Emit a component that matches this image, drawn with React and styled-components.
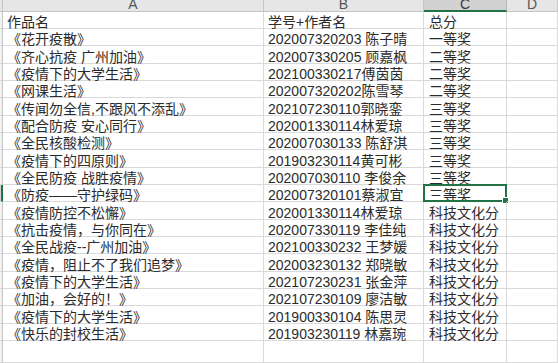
import React from "react";
import styled, { createGlobalStyle } from "styled-components";

const Global = createGlobalStyle`
  html, body { margin: 0; padding: 0; background: #fff; }
  body { font-family: "Liberation Sans", "Noto Sans CJK SC", sans-serif; overflow: hidden; }
`;

const GREEN = "#217346";

const Sheet = styled.div`
  display: grid;
  grid-template-columns: 3px 261px 160px 83px 1fr;
  grid-template-rows: 11.5px repeat(19, 17.35px) 1fr;
  width: 558px;
  height: 363px;
  overflow: hidden;
`;

const Corner = styled.div`
  background: #e6e6e6;
  border-right: 1px solid #c4c4c4;
  border-bottom: 1px solid #c4c4c4;
  box-sizing: border-box;
`;

const ColHead = styled.div`
  box-sizing: border-box;
  background: ${(p) => (p.$active ? "#d2d2d2" : "#e6e6e6")};
  border-right: 1px solid ${(p) => (p.$active ? "#b8b8b8" : "#c8c8c8")};
  border-bottom: ${(p) => (p.$active ? `2px solid ${GREEN}` : "1px solid #c4c4c4")};
  display: flex;
  justify-content: center;
  align-items: flex-end;
  overflow: hidden;
  color: ${(p) => (p.$active ? "#3a3a3a" : "#555")};
  font-size: 14px;
  padding-bottom: ${(p) => (p.$active ? "0px" : "1px")};
  span { line-height: 12px; display: block; }
`;

const RowHead = styled.div`
  box-sizing: border-box;
  background: ${(p) => (p.$active ? "#d2d2d2" : "#f2f2f2")};
  border-right: ${(p) => (p.$active ? `2px solid ${GREEN}` : "1px solid #c6c6c6")};
  border-bottom: 1px solid #d6d6d6;
`;

const Cell = styled.div`
  box-sizing: border-box;
  position: relative;
  border-right: 1px solid #d9d9d9;
  border-bottom: 1px solid #d9d9d9;
  display: flex;
  align-items: flex-end;
  padding: 0 0 0 ${(p) => p.$pad || 4}px;
  font-size: 14px;
  color: #2b2b2b;
  white-space: nowrap;
  overflow: visible;
  span { line-height: 12px; display: block; }
`;

const Selected = styled.div`
  position: absolute;
  left: -1px;
  top: -1px;
  right: -1px;
  bottom: -1px;
  border: 2px solid ${GREEN};
  pointer-events: none;
  &::after {
    content: "";
    position: absolute;
    right: -4px;
    bottom: -4px;
    width: 5px;
    height: 5px;
    background: ${GREEN};
    border: 1px solid #fff;
  }
`;

const rows = [
  ["作品名", "学号+作者名", "总分"],
  ["《花开疫散》", "202007320203 陈子晴", "一等奖"],
  ["《齐心抗疫 广州加油》", "202007330205 顾嘉枫", "二等奖"],
  ["《疫情下的大学生活》", "202100330217傅茵茵", "二等奖"],
  ["《网课生活》", "202007320202陈雪琴", "二等奖"],
  ["《传闻勿全信,不跟风不添乱》", "202107230110郭晓銮", "三等奖"],
  ["《配合防疫 安心同行》", "202001330114林爱琼", "三等奖"],
  ["《全民核酸检测》", "202007030133 陈舒淇", "三等奖"],
  ["《疫情下的四原则》", "201903230114黄可彬", "三等奖"],
  ["《全民防疫 战胜疫情》", "202007030110 李俊余", "三等奖"],
  ["《防疫——守护绿码》", "202007320101蔡淑宜", "三等奖"],
  ["《疫情防控不松懈》", "202001330114林爱琼", "科技文化分"],
  ["《抗击疫情，与你同在》", "202007330119 李佳纯", "科技文化分"],
  ["《全民战疫--广州加油》", "202100330232 王梦媛", "科技文化分"],
  ["《疫情，阻止不了我们追梦》", "202003230132 郑晓敏", "科技文化分"],
  ["《疫情下的大学生活》", "202107230231 张金萍", "科技文化分"],
  ["《加油，会好的！》", "202107230109 廖洁敏", "科技文化分"],
  ["《疫情下的大学生活》", "201900330104 陈思灵", "科技文化分"],
  ["《快乐的封校生活》", "201903230119 林嘉琬", "科技文化分"],
  ["", "", ""],
];

const SEL = 10;

export default function App() {
  return (
    <>
      <Global />
      <Sheet>
        <Corner />
        <ColHead><span>A</span></ColHead>
        <ColHead><span>B</span></ColHead>
        <ColHead $active><span>C</span></ColHead>
        <ColHead><span>D</span></ColHead>
        {rows.map((r, i) => (
          <React.Fragment key={i}>
            <RowHead $active={i === SEL} />
            <Cell $pad={4}><span>{r[0]}</span></Cell>
            <Cell $pad={4}><span>{r[1]}</span></Cell>
            <Cell $pad={5}>
              <span>{r[2]}</span>
              {i === SEL && <Selected />}
            </Cell>
            <Cell />
          </React.Fragment>
        ))}
      </Sheet>
    </>
  );
}
